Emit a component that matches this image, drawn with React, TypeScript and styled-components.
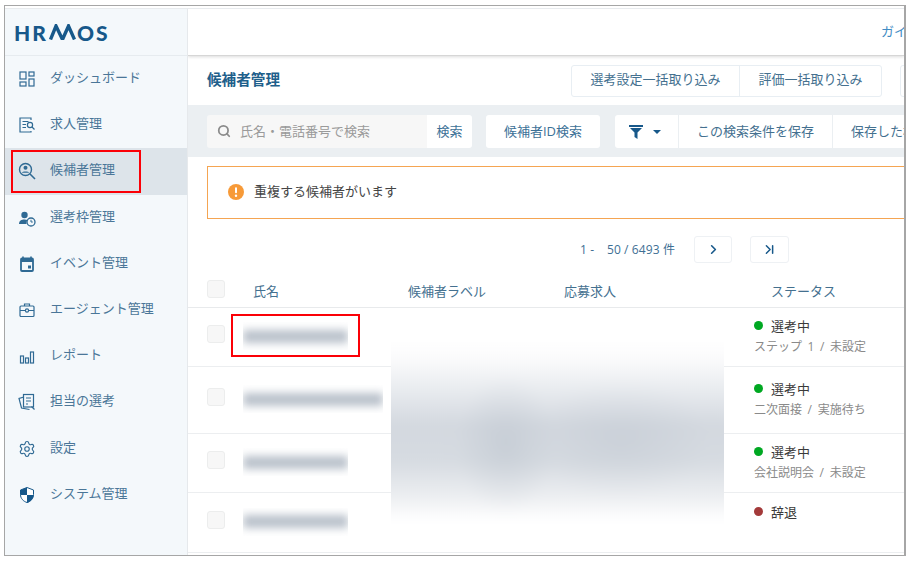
import React from "react";
import styled, { createGlobalStyle } from "styled-components";
import { ChevronLast, ChevronRight, Search, Settings } from "lucide-react";

const Global = createGlobalStyle`
  html, body { margin: 0; padding: 0; background: #fff; }
  * { box-sizing: border-box; }
  body {
    font-family: "Open Sans", "Noto Sans CJK JP", sans-serif;
    font-size: 13px;
    color: #333;
  }
`;

const blue = "#2f6a94";

const DashboardIcon = () => (
  <svg width="18" height="18" viewBox="0 0 18 18" fill="none" stroke={blue} strokeWidth="1.2">
    <rect x="2" y="2" width="6" height="7" />
    <rect x="11" y="2" width="5" height="4" />
    <rect x="2" y="12" width="6" height="4" />
    <rect x="11" y="9" width="5" height="7" />
  </svg>
);

const JobIcon = () => (
  <svg width="18" height="18" viewBox="0 0 18 18" fill="none" stroke={blue} strokeWidth="1.2">
    <path d="M13 4V2H2v14h11v-1" />
    <path d="M4.5 5.5h6M4.5 8.5h3.5M4.5 11.5h3.5" />
    <circle cx="12" cy="9" r="2.6" />
    <path d="M14 11l2.5 2.5" />
  </svg>
);

const CandidateIcon = () => (
  <svg width="18" height="18" viewBox="0 0 18 18" fill="none" stroke={blue}>
    <circle cx="7.5" cy="7.5" r="6" strokeWidth="1.4" />
    <circle cx="7.5" cy="5.8" r="2" fill={blue} stroke="none" />
    <path d="M3.8 10.8c.6-1.7 6.8-1.7 7.4 0z" fill={blue} stroke="none" />
    <path d="M12 12l5 5" strokeWidth="1.6" />
  </svg>
);

const ScheduleIcon = () => (
  <svg width="18" height="18" viewBox="0 0 18 18" fill="none">
    <circle cx="6.5" cy="6" r="3.2" fill={blue} />
    <path d="M1 15c0-3.5 2.5-4.6 5.5-4.6 1.2 0 2.2.2 3 .5-.8.9-1.2 2.4-1 4.1z" fill={blue} />
    <circle cx="13" cy="13" r="4" stroke={blue} strokeWidth="1.3" />
    <path d="M13 10.8V13h1.8" stroke={blue} />
  </svg>
);

const CalendarIcon = () => (
  <svg width="18" height="18" viewBox="0 0 18 18" fill="none">
    <path d="M5 1.5v3M13 1.5v3" stroke={blue} strokeWidth="1.6" />
    <rect x="3" y="3.5" width="12" height="12.5" rx="1" stroke={blue} strokeWidth="1.8" />
    <rect x="3" y="3.5" width="12" height="3.5" fill={blue} />
    <rect x="10" y="10.5" width="3" height="3" fill={blue} />
  </svg>
);

const AgentIcon = () => (
  <svg width="18" height="18" viewBox="0 0 18 18" fill="none" stroke={blue} strokeWidth="1.2">
    <rect x="2" y="5" width="14" height="10.5" rx="1" />
    <path d="M6.5 5V3h5v2M2 9.5h5M11 9.5h5" />
    <circle cx="9" cy="9.5" r="1.6" />
  </svg>
);

const ReportIcon = () => (
  <svg width="18" height="18" viewBox="0 0 18 18" fill="none" stroke={blue} strokeWidth="1.2">
    <rect x="2.5" y="9" width="3" height="7" />
    <rect x="7.5" y="11" width="3" height="5" />
    <rect x="12.5" y="5" width="3" height="11" />
  </svg>
);

const ReviewIcon = () => (
  <svg width="18" height="18" viewBox="0 0 18 18" fill="none" stroke={blue} strokeWidth="1.2">
    <path d="M6 4l-5 1.500 2.500 9.500 8 1.500" />
    <rect x="5.500" y="1.500" width="10" height="12.500" />
    <path d="M8 5h5M8 8h5M8 11h2" />
    <path d="M13.500 13.500l3 3" />
  </svg>
);

const ShieldIcon = () => (
  <svg width="18" height="18" viewBox="0 0 18 18" fill="none">
    <path d="M9 1.500l6.500 2.500v4.500c0 4-2.800 6.800-6.500 8-3.700-1.200-6.500-4-6.500-8V4z" fill="#fff" stroke="#17588a" strokeWidth="1" />
    <path d="M9 1.500V9H2.500V4zM9 9h6.500c0 4-2.800 6.800-6.500 8z" fill="#17588a" />
  </svg>
);

const FunnelIcon = () => (
  <svg width="14" height="14" viewBox="0 0 14 14">
    <path d="M0 0h14v2H0zM1 3h12L8.500 7.500V14L5.500 12V7.500z" fill="#17588a" />
  </svg>
);

const AlertIcon = () => (
  <svg width="16" height="16" viewBox="0 0 16 16">
    <circle cx="8" cy="8" r="8" fill="#f79a38" />
    <rect x="7" y="3.200" width="2" height="6" rx="1" fill="#fff" />
    <circle cx="8" cy="11.700" r="1.200" fill="#fff" />
  </svg>
);

const navItems = [
  { label: "ダッシュボード", icon: <DashboardIcon /> },
  { label: "求人管理", icon: <JobIcon /> },
  { label: "候補者管理", icon: <CandidateIcon />, active: true },
  { label: "選考枠管理", icon: <ScheduleIcon /> },
  { label: "イベント管理", icon: <CalendarIcon /> },
  { label: "エージェント管理", icon: <AgentIcon /> },
  { label: "レポート", icon: <ReportIcon /> },
  { label: "担当の選考", icon: <ReviewIcon /> },
  { label: "設定", icon: <Settings size={18} color={blue} strokeWidth={1.5} /> },
  { label: "システム管理", icon: <ShieldIcon /> },
];

const rows = [
  { height: 59, nameWidth: 105, color: "#00a822", status: "選考中", sub: "ステップ 1 / 未設定" },
  { height: 67, nameWidth: 140, color: "#00a822", status: "選考中", sub: "二次面接 / 実施待ち" },
  { height: 59, nameWidth: 105, color: "#00a822", status: "選考中", sub: "会社説明会 / 未設定" },
  { height: 60, nameWidth: 105, color: "#a33a3a", status: "辞退", sub: "" },
];

const App = () => {
  return (
    <>
      <Global />
      <Frame>
        <Sidebar>
          <LogoBar>
            <Logo>
              HR
              <svg width="27" height="16" viewBox="0 0 27 16" fill="none" stroke="#17588a" strokeWidth="3.4">
                <path d="M1.500 15.500L7 2l6.500 13.500L19.500 2l6 13.500" />
              </svg>
              OS
            </Logo>
          </LogoBar>
          <nav>
            {navItems.map((item) => (
              <NavItem key={item.label} $active={item.active}>
                {item.icon}
                <NavLabel>{item.label}</NavLabel>
              </NavItem>
            ))}
          </nav>
        </Sidebar>
        <Main>
          <TopBar>
            <GuideLink>ガイド</GuideLink>
          </TopBar>
          <PageHead>
            <PageTitle>候補者管理</PageTitle>
            <ButtonGroup>
              <GroupButton $width={167}>選考設定一括取り込み</GroupButton>
              <GroupButton $width={142}>評価一括取り込み</GroupButton>
            </ButtonGroup>
            <ButtonGroup>
              <GroupButton $width={120}>一括操作</GroupButton>
            </ButtonGroup>
          </PageHead>
          <SearchBand>
            <SearchBox>
              <Search size={14} color="#8b8b8b" strokeWidth={3} />
              <span>氏名・電話番号で検索</span>
            </SearchBox>
            <SearchButton>検索</SearchButton>
            <IdButton>候補者ID検索</IdButton>
            <FilterGroup>
              <FilterCell>
                <FunnelIcon />
                <Caret />
              </FilterCell>
              <SaveCell>この検索条件を保存</SaveCell>
              <SaveCell>保存した検索条件</SaveCell>
            </FilterGroup>
          </SearchBand>
          <AlertBox>
            <AlertIcon />
            <AlertText>重複する候補者がいます</AlertText>
          </AlertBox>
          <Pager>
            <PagerText>1 -&nbsp;&nbsp;&nbsp; 50 / 6493 件</PagerText>
            <PagerButton $width={38}>
              <ChevronRight size={15} strokeWidth={2.6} />
            </PagerButton>
            <PagerButton $width={39}>
              <ChevronLast size={15} strokeWidth={2.4} />
            </PagerButton>
          </Pager>
          <TableHead>
            <CheckCell>
              <Check />
            </CheckCell>
            <HeadCell $width={155}>氏名</HeadCell>
            <HeadCell $width={156}>候補者ラベル</HeadCell>
            <HeadCell $width={207}>応募求人</HeadCell>
            <HeadCell>ステータス</HeadCell>
          </TableHead>
          {rows.map((row, i) => (
            <Row key={i} $height={row.height}>
              <CheckCell>
                <Check />
              </CheckCell>
              <NameCell>
                <NameBlur style={{ width: row.nameWidth }}>
                  <NameInk />
                </NameBlur>
              </NameCell>
              <StatusCell>
                <StatusLine>
                  <Dot $color={row.color} />
                  {row.status}
                </StatusLine>
                <StatusSub>{row.sub}</StatusSub>
              </StatusCell>
            </Row>
          ))}
        </Main>
        <RedMark $left={6} $top={144} $width={130} $height={43} />
        <RedMark $left={226} $top={308} $width={129} $height={43} />
        <BlurPatch>
          <BlurInk />
        </BlurPatch>
      </Frame>
    </>
  );
};
export default App;

const Frame = styled.div`
  position: relative;
  display: flex;
  width: 902px;
  height: 551px;
  margin: 5px 0 0 4px;
  border: 1px solid #a6a6a6;
  border-right-width: 2px;
  padding-top: 2px;
  overflow: hidden;
  background: #fff;
`;

const Sidebar = styled.aside`
  flex: 0 0 183px;
  background: #f4f8fb;
  border-top: 1px solid #e8ebee;
  border-right: 1px solid #e6e9ec;
`;

const LogoBar = styled.div`
  height: 47px;
  display: flex;
  align-items: center;
  padding-left: 9px;
  border-bottom: 1px solid #e6ebef;
`;

const Logo = styled.div`
  display: flex;
  align-items: center;
  gap: 1px;
  font-family: Lato, "Liberation Sans", sans-serif;
  font-weight: 900;
  font-size: 21px;
  line-height: 1;
  letter-spacing: 2px;
  color: #17588a;
`;

const NavItem = styled.div<{ $active?: boolean }>`
  display: flex;
  align-items: center;
  gap: 14px;
  height: 46.2px;
  padding-left: 13px;
  color: #4a7698;
  background: ${(p) => (p.$active ? "#dde4ea" : "transparent")};
  svg {
    flex: none;
  }
`;

const NavLabel = styled.span`
  margin-bottom: 5px;
`;

const Main = styled.main`
  flex: 1;
  min-width: 0;
  overflow: hidden;
`;

const TopBar = styled.header`
  height: 48px;
  padding-bottom: 3px;
  border-top: 1px solid #e8ebee;
  border-bottom: 1px solid #d6d6d6;
  box-shadow: 0 1px 3px rgba(0, 0, 0, 0.14);
  display: flex;
  align-items: center;
  padding-left: 693px;
  white-space: nowrap;
`;

const GuideLink = styled.span`
  color: #3f8cc4;
`;

const PageHead = styled.div`
  height: 49px;
  display: flex;
  align-items: center;
  gap: 18px;
  padding-left: 19px;
`;

const PageTitle = styled.h1`
  flex: 0 0 346px;
  margin: 0 0 5px;
  font-size: 14.6px;
  font-weight: 700;
  color: #1f5f8b;
`;

const ButtonGroup = styled.div`
  flex: none;
  display: flex;
  height: 32px;
  border: 1px solid #e8eef3;
  border-radius: 3px;
`;

const GroupButton = styled.div<{ $width: number }>`
  width: ${(p) => p.$width}px;
  padding-bottom: 5px;
  display: flex;
  align-items: center;
  justify-content: center;
  color: #44708f;
  white-space: nowrap;
  & + & {
    border-left: 1px solid #e8eef3;
  }
`;

const SearchBand = styled.div`
  height: 52px;
  padding: 10px 0 9px 19px;
  display: flex;
  background: #ebeff2;
`;

const SearchBox = styled.div`
  flex: 0 0 220px;
  display: flex;
  align-items: center;
  gap: 9px;
  padding: 0 0 2px 10px;
  background: #f7f7f7;
  border-radius: 3px 0 0 3px;
  color: #9a9a9a;
`;

const SearchButton = styled.div`
  flex: 0 0 45px;
  padding-bottom: 2px;
  display: flex;
  align-items: center;
  justify-content: center;
  background: #fff;
  border-radius: 0 3px 3px 0;
  color: #3c7197;
`;

const IdButton = styled.div`
  flex: 0 0 114px;
  margin: 0 15px 0 14px;
  padding-bottom: 2px;
  display: flex;
  align-items: center;
  justify-content: center;
  background: #fff;
  border-radius: 3px;
  color: #3c7197;
`;

const FilterGroup = styled.div`
  flex: none;
  display: flex;
  background: #fff;
  border-radius: 3px;
`;

const FilterCell = styled.div`
  width: 63px;
  display: flex;
  align-items: center;
  gap: 10px;
  padding-left: 14px;
`;

const Caret = styled.i`
  width: 0;
  height: 0;
  border-left: 4.500px solid transparent;
  border-right: 4.500px solid transparent;
  border-top: 4.500px solid #17588a;
`;

const SaveCell = styled.div`
  width: 154px;
  display: flex;
  align-items: center;
  padding: 0 0 3px 18px;
  border-left: 1px solid #ebeff2;
  color: #44708f;
  white-space: nowrap;
`;

const AlertBox = styled.div`
  width: 760px;
  height: 53px;
  margin: 9px 0 0 19px;
  padding: 0 0 2px 20px;
  display: flex;
  align-items: center;
  gap: 10px;
  border: 1px solid #f5a552;
  color: #444;
`;

const AlertText = styled.span`
  margin-bottom: 2px;
`;

const Pager = styled.div`
  height: 27px;
  margin-top: 17px;
  padding-right: 115px;
  display: flex;
  justify-content: flex-end;
  align-items: center;
`;

const PagerText = styled.span`
  margin: 0 19px 2px 0;
  font-size: 12px;
  letter-spacing: 0.1px;
  color: #3e6f94;
`;

const PagerButton = styled.div<{ $width: number }>`
  width: ${(p) => p.$width}px;
  height: 27px;
  margin-right: 18px;
  display: flex;
  align-items: center;
  justify-content: center;
  border: 1px solid #eef1f4;
  border-radius: 3px;
  color: #17588a;
  &:last-child {
    margin-right: 0;
  }
`;

const TableHead = styled.div`
  height: 31px;
  margin-top: 14px;
  padding-left: 19px;
  display: flex;
  align-items: center;
  border-bottom: 1px solid #e8eaec;
  white-space: nowrap;
`;

const CheckCell = styled.div`
  flex: 0 0 46px;
  margin-top: -6px;
`;

const Check = styled.div`
  width: 18px;
  height: 18px;
  background: #f7f7f7;
  border: 1px solid #eceded;
  border-radius: 3px;
`;

const HeadCell = styled.div<{ $width?: number }>`
  flex: ${(p) => (p.$width ? `0 0 ${p.$width}px` : "1")};
  margin-bottom: 4px;
  color: #44708f;
`;

const Row = styled.div<{ $height: number }>`
  height: ${(p) => p.$height}px;
  padding-left: 19px;
  display: flex;
  align-items: center;
  border-bottom: 1px solid #eceef0;
`;

const NameCell = styled.div`
  flex: 0 0 501px;
`;

const NameBlur = styled.div`
  height: 28px;
  margin: -2px 0 0 -10px;
  display: flex;
  align-items: center;
  overflow: hidden;
`;

const NameInk = styled.div`
  flex: 1;
  height: 13px;
  background: #b8c0ca;
  filter: blur(4.500px);
`;

const StatusCell = styled.div`
  flex: 1;
  min-height: 38px;
  white-space: nowrap;
`;

const StatusLine = styled.div`
  display: flex;
  align-items: center;
  gap: 8px;
  height: 19px;
  padding-bottom: 2px;
  color: #3a3a3a;
`;

const Dot = styled.i<{ $color: string }>`
  width: 9px;
  height: 9px;
  border-radius: 50%;
  background: ${(p) => p.$color};
`;

const StatusSub = styled.div`
  height: 21px;
  font-size: 12px;
  line-height: 21px;
  word-spacing: 2.500px;
  color: #8a8a8a;
`;

const RedMark = styled.div<{ $left: number; $top: number; $width: number; $height: number }>`
  position: absolute;
  left: ${(p) => p.$left}px;
  top: ${(p) => p.$top}px;
  width: ${(p) => p.$width}px;
  height: ${(p) => p.$height}px;
  border: 2px solid #fb0007;
`;

const BlurPatch = styled.div`
  position: absolute;
  left: 386px;
  top: 334px;
  width: 333px;
  height: 186px;
  overflow: hidden;
  background: #fff;
`;

const BlurInk = styled.div`
  position: absolute;
  inset: 0 -20px;
  background:
    radial-gradient(ellipse 50px 70px at 135px 105px, rgba(170, 180, 192, 0.3), transparent),
    radial-gradient(ellipse 90px 60px at 250px 100px, rgba(175, 184, 196, 0.25), transparent),
    linear-gradient(
      to bottom,
      #fff 0,
      #fbfbfc 10%,
      #e7eaee 28%,
      #d3d8df 46%,
      #d6dbe1 65%,
      #eceef1 84%,
      #fff 97%
    );
  filter: blur(6px);
`;
